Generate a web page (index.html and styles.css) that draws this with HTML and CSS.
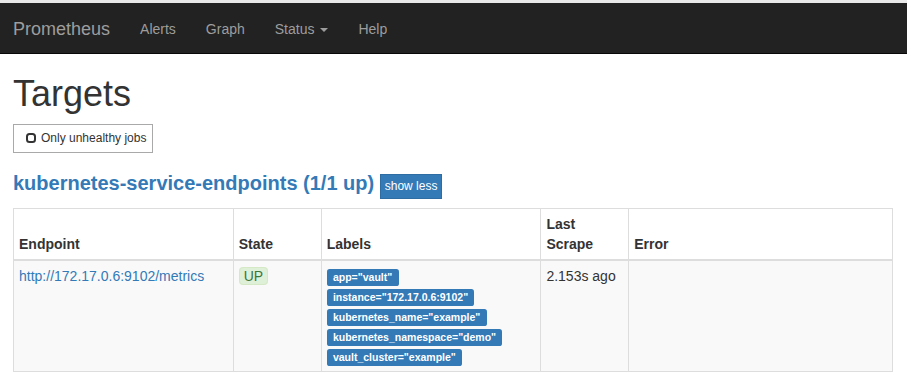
FILE: index.html
```html
<!DOCTYPE html>
<html lang="en">
<head>
    <meta charset="UTF-8">
    <meta name="viewport" content="width=device-width, initial-scale=1.0">
    <title>Prometheus Time Series Collection and Processing Server</title>

    <link rel="stylesheet" href="styles.css">
</head>
<body>
    <nav class="navbar">
        <a class="brand" href="#">Prometheus</a>
        <ul class="nav">
            <li><a href="#">Alerts</a></li>
            <li><a href="#">Graph</a></li>
            <li><a href="#">Status <span class="caret"></span></a></li>
            <li><a href="#">Help</a></li>
        </ul>
    </nav>

    <div class="container">
        <h1>Targets</h1>
        <button class="btn-filter">
            <svg class="unchecked" width="10" height="10" viewBox="0 0 10 10">
                <rect x="1" y="1" width="8" height="8" rx="2.5" fill="none" stroke="#333" stroke-width="2"/>
            </svg>
            Only unhealthy jobs
        </button>

        <h2>
            <a href="#job-kubernetes-service-endpoints">kubernetes-service-endpoints (1/1 up)</a>
            <button class="btn-toggle">show less</button>
        </h2>

        <table class="targets">
            <thead>
                <tr>
                    <th class="col-endpoint">Endpoint</th>
                    <th class="col-state">State</th>
                    <th class="col-labels">Labels</th>
                    <th class="col-scrape">Last Scrape</th>
                    <th class="col-error">Error</th>
                </tr>
            </thead>
            <tbody>
                <tr>
                    <td><a href="#">http://172.17.0.6:9102/metrics</a></td>
                    <td><span class="state-up">UP</span></td>
                    <td>
                        <span class="label">app="vault"</span><br>
                        <span class="label">instance="172.17.0.6:9102"</span><br>
                        <span class="label">kubernetes_name="example"</span><br>
                        <span class="label">kubernetes_namespace="demo"</span><br>
                        <span class="label">vault_cluster="example"</span>
                    </td>
                    <td>2.153s ago</td>
                    <td></td>
                </tr>
            </tbody>
        </table>
    </div>
</body>
</html>
```

FILE: styles.css
```css
/* General Reset */
* {
    box-sizing: border-box;
}

body {
    margin: 0;
    font-family: 'Liberation Sans', Arial, sans-serif;
    font-size: 14px;
    line-height: 20px;
    color: #333;
    background-color: #fff;
}

a {
    color: #337ab7;
    text-decoration: none;
}

/* Navbar */
.navbar {
    display: flex;
    height: 54px;
    padding-left: 13px;
    background-color: #222;
    border-top: 3px solid #e9e9e9;
    border-bottom: 1px solid #080808;
}

.navbar .brand {
    padding: 16px 15px 14px 0;
    font-size: 18px;
    line-height: 20px;
    color: #9d9d9d;
}

.nav {
    display: flex;
    margin: 0;
    padding: 0;
    list-style: none;
}

.nav a {
    display: block;
    padding: 16px 15px 14px;
    line-height: 20px;
    color: #9d9d9d;
}

.caret {
    display: inline-block;
    width: 0;
    height: 0;
    margin-left: 2px;
    vertical-align: middle;
    border-top: 4px solid;
    border-left: 4px solid transparent;
    border-right: 4px solid transparent;
}

/* Page */
.container {
    padding: 0 14px 0 13px;
}

h1 {
    margin: 20px 0 10px;
    font-size: 36px;
    font-weight: 500;
    line-height: 1.1;
}

.btn-filter {
    display: inline-flex;
    align-items: center;
    gap: 5px;
    height: 29px;
    padding: 4px 6px 5px 12px;
    font-family: inherit;
    font-size: 12px;
    line-height: 18px;
    color: #333;
    background-color: #fff;
    border: 1px solid #a9a9a9;
    border-radius: 0;
}

h2 {
    margin: 19px 0 9px;
    font-size: 20px;
    font-weight: bold;
    line-height: 1.1;
}

.btn-toggle {
    padding: 3px 4px;
    font-family: inherit;
    font-size: 12px;
    font-weight: normal;
    line-height: 17px;
    color: #fff;
    background-color: #337ab7;
    border: 1px solid #2e6da4;
    border-radius: 0;
}

/* Targets table */
.targets {
    width: 100%;
    border-collapse: collapse;
    border: 1px solid #ddd;
}

.targets th,
.targets td {
    padding: 5px;
    border: 1px solid #ddd;
    text-align: left;
}

.targets th {
    vertical-align: bottom;
    border-bottom-width: 2px;
}

.targets td {
    vertical-align: top;
}

.targets tbody tr {
    background-color: #f9f9f9;
}

.col-endpoint { width: 25%; }
.col-state { width: 10%; }
.col-labels { width: 25%; }
.col-scrape { width: 10%; }
.col-error { width: 30%; }

.state-up {
    padding: 0 4px;
    color: #3c763d;
    background-color: #dff0d8;
    border: 1px solid #d6e9c6;
    border-radius: 4px;
}

.label {
    display: inline;
    padding: .2em .6em .3em;
    font-size: 10.5px;
    font-weight: bold;
    line-height: 1;
    color: #fff;
    white-space: nowrap;
    background-color: #337ab7;
    border-radius: .25em;
}
```
